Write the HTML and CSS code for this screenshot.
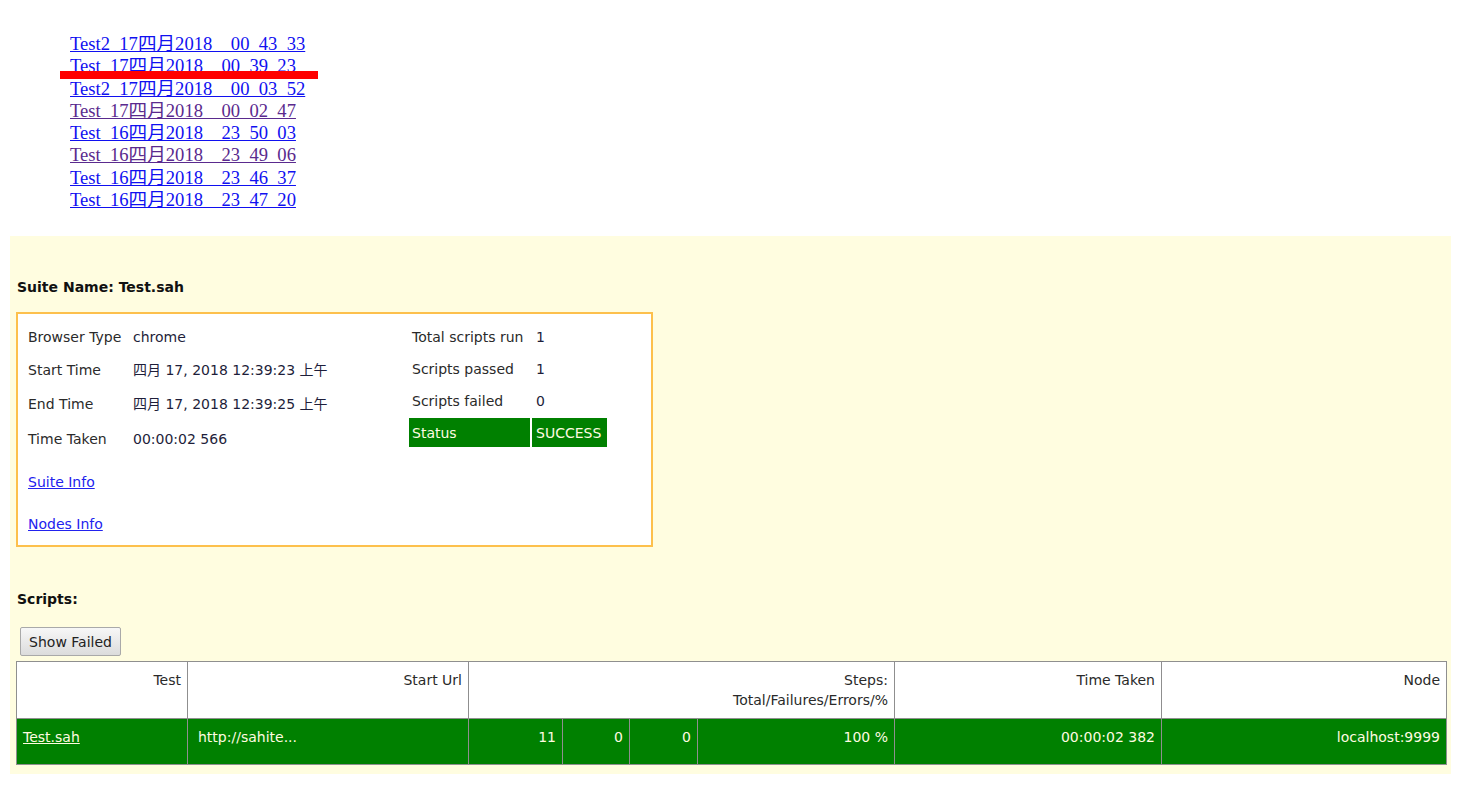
FILE: index.html
```html
<!DOCTYPE html>
<html>
<head>
<meta charset="utf-8">
<title>Sahi Reports</title>
<link rel="stylesheet" href="styles.css">
</head>
<body>
<div class="page">
  <ul class="runs">
    <li><a href="#" class="run">Test2_17四月2018__00_43_33</a></li>
    <li class="marked"><a href="#" class="run">Test_17四月2018__00_39_23</a><span class="strike"></span></li>
    <li><a href="#" class="run">Test2_17四月2018__00_03_52</a></li>
    <li><a href="#" class="run visited">Test_17四月2018__00_02_47</a></li>
    <li><a href="#" class="run">Test_16四月2018__23_50_03</a></li>
    <li><a href="#" class="run visited">Test_16四月2018__23_49_06</a></li>
    <li><a href="#" class="run">Test_16四月2018__23_46_37</a></li>
    <li><a href="#" class="run">Test_16四月2018__23_47_20</a></li>
  </ul>

  <div class="panel">
    <h3 class="title suite-title">Suite Name: Test.sah</h3>
    <div class="info">
      <div class="info-left">
        <div class="kv">
          <span class="k r1">Browser Type</span><span class="v r1">chrome</span>
          <span class="k r2">Start Time</span><span class="v r2">四月 17, 2018 12:39:23 上午</span>
          <span class="k r3">End Time</span><span class="v r3">四月 17, 2018 12:39:25 上午</span>
          <span class="k r4">Time Taken</span><span class="v r4">00:00:02 566</span>
        </div>
        <a href="#" class="info-link first">Suite Info</a>
        <a href="#" class="info-link">Nodes Info</a>
      </div>
      <table class="summary">
        <tr><td class="sk">Total scripts run</td><td class="sv">1</td></tr>
        <tr><td class="sk">Scripts passed</td><td class="sv">1</td></tr>
        <tr><td class="sk">Scripts failed</td><td class="sv">0</td></tr>
        <tr class="status"><td class="sk">Status</td><td class="sv">SUCCESS</td></tr>
      </table>
    </div>

    <h3 class="title scripts-title">Scripts:</h3>
    <button class="btn" type="button">Show Failed</button>

    <table class="results">
      <colgroup>
        <col class="c-test"><col class="c-url"><col class="c-total"><col class="c-fail"><col class="c-err"><col class="c-pct"><col class="c-time"><col class="c-node">
      </colgroup>
      <tr class="head">
        <th>Test</th>
        <th>Start Url</th>
        <th colspan="4">Steps:<br>Total/Failures/Errors/%</th>
        <th>Time Taken</th>
        <th>Node</th>
      </tr>
      <tr class="pass">
        <td class="left"><a href="#" class="script-link">Test.sah</a></td>
        <td class="left url">http://sahite...</td>
        <td>11</td>
        <td>0</td>
        <td>0</td>
        <td>100 %</td>
        <td>00:00:02 382</td>
        <td>localhost:9999</td>
      </tr>
    </table>
  </div>
</div>
</body>
</html>
```

FILE: styles.css
```css
html, body {
  margin: 0;
  padding: 0;
  background: #ffffff;
}

body {
  font-family: "DejaVu Sans", Verdana, "Noto Sans CJK SC", sans-serif;
  font-size: 14px;
  color: #222;
}

.page {
  padding-top: 33px;
}

/* run list */
.runs {
  list-style: none;
  margin: 0 0 25px;
  padding: 0 0 0 70px;
  font-family: "Liberation Serif", "Noto Sans CJK SC", serif;
  font-size: 18.6px;
  line-height: 22.3px;
}

.runs li {
  position: relative;
  height: 22.3px;
}

.run {
  color: #1010f0;
  text-decoration: underline;
}

.run.visited {
  color: #5a2a8e;
}

.strike {
  position: absolute;
  left: -10px;
  top: 16px;
  width: 258px;
  height: 8px;
  background: #ff0000;
}

/* panel */
.panel {
  margin: 0 10px;
  padding: 41px 5px 9px 6px;
  background: #fffde0;
}

.title {
  margin: 0;
  font-size: 14px;
  line-height: 20px;
  font-weight: bold;
  color: #111;
  padding-left: 1px;
}

.info {
  margin-top: 15px;
  width: 633px;
  height: 231px;
  border: 2px solid #fdc04c;
  background: #ffffff;
  display: flex;
  box-sizing: content-box;
}

.info-left {
  width: 379px;
  padding: 7px 0 0 10px;
  display: flex;
  flex-direction: column;
  align-items: flex-start;
}

.kv {
  display: grid;
  grid-template-columns: 105px auto;
  grid-template-rows: 32px 33px 35px 35px;
  align-items: center;
  line-height: 20px;
}

.k {
  color: #2a2a2a;
}

.v {
  color: #1e1e3a;
}

.info-link {
  color: #2222ee;
  text-decoration: underline;
  line-height: 20px;
}

.info-link.first {
  margin-top: 16px;
  margin-bottom: 22px;
}

.summary {
  margin-top: 6px;
  border-collapse: separate;
  border-spacing: 2px;
  align-self: flex-start;
}

.summary td {
  height: 30px;
  padding: 0 3px;
  line-height: 20px;
  vertical-align: middle;
  box-sizing: border-box;
}

.summary .sk {
  width: 121px;
  color: #2a2a2a;
}

.summary .sv {
  width: 75px;
  padding-left: 4px;
  color: #1e1e3a;
}

.summary .status td {
  height: 29px;
  background: #008000;
  color: #fffbe0;
}

.scripts-title {
  margin-top: 42px;
}

.btn {
  display: block;
  margin: 18px 0 0 4px;
  width: 101px;
  height: 29px;
  padding: 0;
  font-family: "DejaVu Sans", Verdana, sans-serif;
  font-size: 14px;
  color: #222;
  background: linear-gradient(#f7f7f7, #dcdcdc);
  border: 1px solid #a9a9a9;
  border-radius: 2px;
}

/* results table */
.results {
  margin-top: 5px;
  width: 1430px;
  table-layout: fixed;
  border-collapse: collapse;
  border: 1px solid #8f8f8f;
}

.c-test { width: 171px; }
.c-url { width: 281px; }
.c-total { width: 94px; }
.c-fail { width: 67px; }
.c-err { width: 68px; }
.c-pct { width: 197px; }
.c-time { width: 267px; }
.c-node { width: 285px; }

.results th,
.results td {
  border: 1px solid #8f8f8f;
  text-align: right;
  vertical-align: top;
  line-height: 20px;
  padding: 8px 6px 8px 6px;
  font-weight: normal;
}

.results .head th {
  background: #ffffff;
  color: #2a2a2a;
  height: 40px;
}

.results .pass td {
  background: #008000;
  color: #fffbe0;
  height: 29px;
}

.results .pass td.left {
  text-align: left;
}

.results .pass td.url {
  padding-left: 10px;
}

.script-link {
  color: #fffbe0;
  text-decoration: underline;
}
```
